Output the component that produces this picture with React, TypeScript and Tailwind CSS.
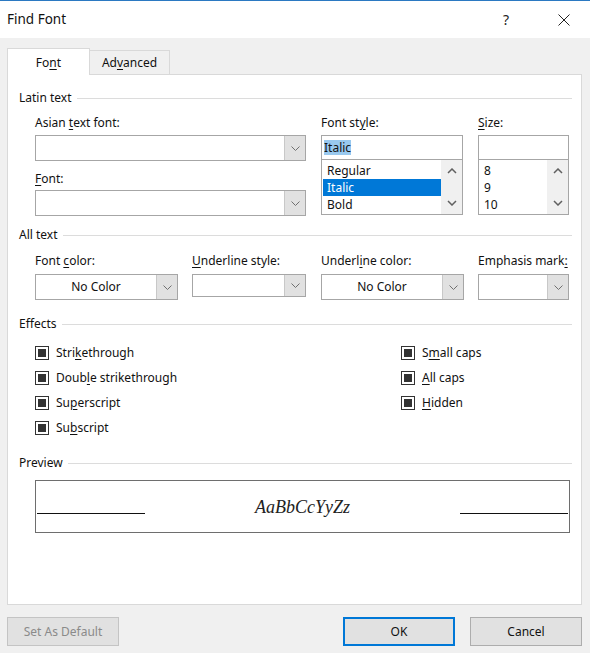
import type { ReactNode } from "react";

function ChevronDown() {
  return (
    <svg width="9" height="5" viewBox="0 0 9 5">
      <path d="M0.5 0.5 L4.5 4.5 L8.5 0.5" fill="none" stroke="#707070" strokeWidth="1" />
    </svg>
  );
}

function ScrollArrow({ up }: { up?: boolean }) {
  return (
    <svg width="10" height="6" viewBox="0 0 10 6">
      <path
        d={up ? "M1 5 L5 1 L9 5" : "M1 1 L5 5 L9 1"}
        fill="none"
        stroke="#606060"
        strokeWidth="1.5"
      />
    </svg>
  );
}

function Group({ title }: { title: string }) {
  return (
    <div className="flex items-center h-4 gap-[5px]">
      <span className="leading-4">{title}</span>
      <div className="flex-1 h-px bg-[#dcdcdc]" />
    </div>
  );
}

function Label({ children }: { children: ReactNode }) {
  return <div className="h-4 leading-4 whitespace-nowrap">{children}</div>;
}

function U({ children }: { children: ReactNode }) {
  return <span className="underline underline-offset-[2px]">{children}</span>;
}

function Combo({ className, text }: { className: string; text?: string }) {
  return (
    <div className={`flex border border-[#a6a6a6] bg-white ${className}`}>
      <div className="flex-1 flex items-center justify-center leading-4">{text}</div>
      <div className="w-[21px] flex items-center justify-center bg-[#e1e1e1] border-l border-[#c8c8c8]">
        <ChevronDown />
      </div>
    </div>
  );
}

function ListBox({ items, selected }: { items: string[]; selected?: number }) {
  return (
    <div className="flex h-[55px] border-x border-b border-[#a6a6a6] bg-white">
      <div className="flex-1 pt-[2px] pl-px">
        {items.map((it, i) => (
          <div
            key={it}
            className={`h-[17px] leading-[17px] pl-[4px] ${i === selected ? "bg-[#0078d7] text-white" : ""}`}
          >
            {it}
          </div>
        ))}
      </div>
      <div className="w-[21px] bg-[#f0f0f0] flex flex-col items-center justify-between py-[8px]">
        <ScrollArrow up />
        <ScrollArrow />
      </div>
    </div>
  );
}

function Check({ children }: { children: ReactNode }) {
  return (
    <div className="h-[25px] flex items-center gap-[7px]">
      <div className="w-[14px] h-[14px] border border-[#333333] flex items-center justify-center bg-white">
        <div className="w-2 h-2 bg-[#333333]" />
      </div>
      <span className="leading-4">{children}</span>
    </div>
  );
}

export default function App() {
  return (
    <div className="w-[590px] h-[653px] bg-[#f0f0f0] text-[12px] text-[#111111] font-['Noto_Sans',sans-serif] overflow-hidden">
      {/* Title bar */}
      <div className="h-px bg-[#2b79c2]" />
      <div className="h-[37px] bg-white flex items-center pl-[7px] pr-[20px]">
        <span className="text-[13.5px] flex-1">Find Font</span>
        <span className="text-[14px] mr-[49px] text-[#222222]">?</span>
        <svg width="12" height="12" viewBox="0 0 12 12">
          <path d="M0.5 0.5 L11.5 11.5 M11.5 0.5 L0.5 11.5" stroke="#222222" strokeWidth="1" />
        </svg>
      </div>

      <div className="pl-[7px] pr-[8px] pt-[10px]">
        {/* Tabs */}
        <div className="flex items-end">
          <div className="relative z-10 -mb-px w-[83px] h-[27px] bg-white border border-b-0 border-[#d9d9d9] flex items-center justify-center pt-[2px]">
            Fo<U>n</U>t
          </div>
          <div className="w-[80px] h-[24px] bg-[#f0f0f0] border border-l-0 border-b-0 border-[#d9d9d9] flex items-center justify-center">
            Ad<U>v</U>anced
          </div>
        </div>

        {/* Panel */}
        <div className="h-[531px] bg-white border border-[#d9d9d9] pt-[15px] pl-[11px] pr-[9px]">
          <Group title="Latin text" />
          <div className="ml-[16px] mt-[9px] grid grid-cols-[271px_142px_91px] gap-x-[15px]">
            <div>
              <Label>
                Asian <U>t</U>ext font:
              </Label>
              <Combo className="mt-[4px] h-[26px]" />
              <div className="mt-[10px]">
                <Label>
                  <U>F</U>ont:
                </Label>
              </div>
              <Combo className="mt-[3px] h-[26px]" />
            </div>
            <div>
              <Label>
                Font st<U>y</U>le:
              </Label>
              <div className="mt-[4px] h-[25px] border border-[#a6a6a6] flex items-center pl-[2px]">
                <span className="bg-[#99c9ef] leading-[15px]">Italic</span>
              </div>
              <ListBox items={["Regular", "Italic", "Bold"]} selected={1} />
            </div>
            <div>
              <Label>
                <U>S</U>ize:
              </Label>
              <div className="mt-[4px] h-[25px] border border-[#a6a6a6]" />
              <ListBox items={["8", "9", "10"]} />
            </div>
          </div>

          <div className="mt-[11px]">
            <Group title="All text" />
          </div>
          <div className="ml-[16px] mt-[10px] flex">
            <div className="w-[143px]">
              <Label>
                Font <U>c</U>olor:
              </Label>
              <Combo className="mt-[5px] h-[26px]" text="No Color" />
            </div>
            <div className="w-[114px] ml-[14px]">
              <Label>
                <U>U</U>nderline style:
              </Label>
              <Combo className="mt-[5px] h-[23px]" />
            </div>
            <div className="w-[143px] ml-[15px]">
              <Label>
                Underl<U>i</U>ne color:
              </Label>
              <Combo className="mt-[5px] h-[26px]" text="No Color" />
            </div>
            <div className="w-[91px] ml-[14px]">
              <Label>
                Emphasis mark<U>:</U>
              </Label>
              <Combo className="mt-[5px] h-[26px]" />
            </div>
          </div>

          <div className="mt-[16px]">
            <Group title="Effects" />
          </div>
          <div className="ml-[16px] mt-[8px] flex">
            <div className="w-[366px]">
              <Check>
                Stri<U>k</U>ethrough
              </Check>
              <Check>
                Doub<U>l</U>e strikethrough
              </Check>
              <Check>
                Su<U>p</U>erscript
              </Check>
              <Check>
                Su<U>b</U>script
              </Check>
            </div>
            <div>
              <Check>
                S<U>m</U>all caps
              </Check>
              <Check>
                <U>A</U>ll caps
              </Check>
              <Check>
                <U>H</U>idden
              </Check>
            </div>
          </div>

          <div className="mt-[15px]">
            <Group title="Preview" />
          </div>
          <div className="ml-[16px] mt-[9px] w-[535px] h-[53px] border border-[#6e6e6e] flex items-end pb-[18px] px-px">
            <div className="w-[108px] h-px bg-[#111111]" />
            <div className="flex-1 text-center text-[18px] leading-[20px] italic font-['Liberation_Serif',serif] text-[#222222] -mb-[3px]">
              AaBbCcYyZz
            </div>
            <div className="w-[108px] h-px bg-[#111111]" />
          </div>
        </div>

        {/* Buttons */}
        <div className="mt-[12px] flex">
          <div className="w-[112px] h-[29px] border border-[#c4c4c4] bg-[#e1e1e1] text-[#8a8a8a] flex items-center justify-center">
            Set As Default
          </div>
          <div className="flex-1" />
          <div className="w-[112px] h-[29px] border-2 border-[#0078d7] bg-[#e1e1e1] flex items-center justify-center">
            OK
          </div>
          <div className="w-[112px] h-[29px] ml-[15px] border border-[#adadad] bg-[#e1e1e1] flex items-center justify-center">
            Cancel
          </div>
        </div>
      </div>
    </div>
  );
}
